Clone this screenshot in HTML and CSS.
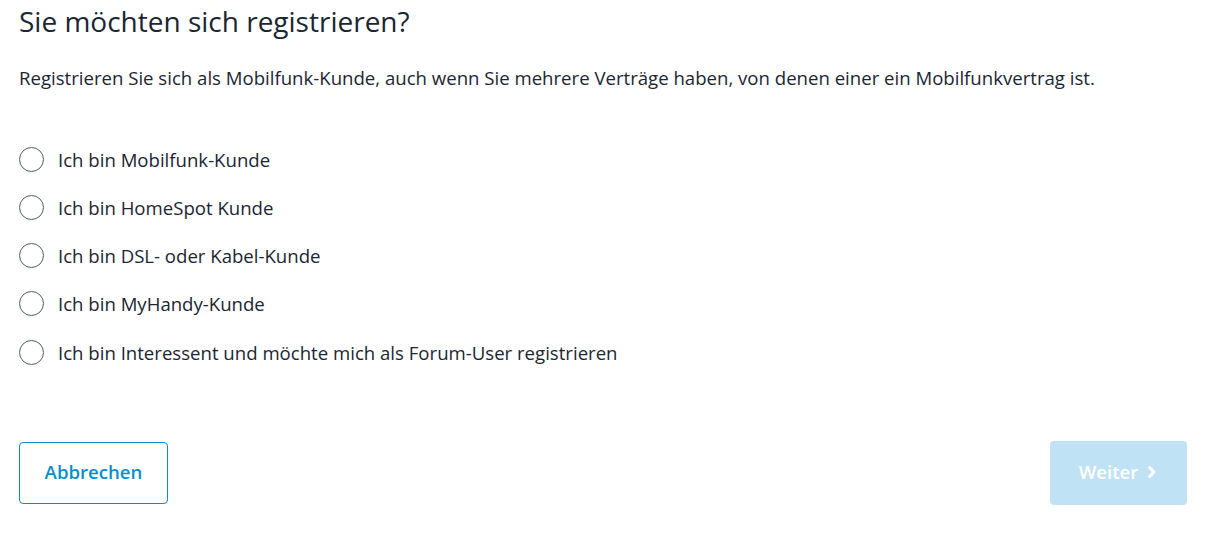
FILE: index.html
```html
<!DOCTYPE html>
<html lang="de">
<head>
<meta charset="utf-8">
<title>Registrieren</title>
<link rel="stylesheet" href="styles.css">
</head>
<body>
<div class="page">
  <h1 class="title">Sie möchten sich registrieren?</h1>
  <p class="intro">Registrieren Sie sich als Mobilfunk-Kunde, auch wenn Sie mehrere Verträge haben, von denen einer ein Mobilfunkvertrag ist.</p>
  <div class="options">
    <label class="option"><span class="radio"></span><span class="label">Ich bin Mobilfunk-Kunde</span></label>
    <label class="option"><span class="radio"></span><span class="label">Ich bin HomeSpot Kunde</span></label>
    <label class="option"><span class="radio"></span><span class="label">Ich bin DSL- oder Kabel-Kunde</span></label>
    <label class="option"><span class="radio"></span><span class="label">Ich bin MyHandy-Kunde</span></label>
    <label class="option"><span class="radio"></span><span class="label">Ich bin Interessent und möchte mich als Forum-User registrieren</span></label>
  </div>
  <div class="actions">
    <button class="btn btn-secondary">Abbrechen</button>
    <button class="btn btn-primary" disabled>Weiter <svg class="chev" width="12" height="14" viewBox="0 0 12 14"><path d="M3.5 2.5 L8 7 L3.5 11.5" fill="none" stroke="currentColor" stroke-width="3" stroke-linecap="round" stroke-linejoin="round"/></svg></button>
  </div>
</div>
</body>
</html>
```
FILE: styles.css
```css
html, body { margin: 0; padding: 0; background: #fff; }
body { font-family: "Open Sans", "Noto Sans", sans-serif; color: #1b2633; }
.page { width: 1168px; padding: 0 0 0 19px; }
.title { margin: 0; padding-top: 2px; font-size: 28px; font-weight: 400; line-height: 38px; letter-spacing: 0; }
.intro { margin: 25px 0 0; font-size: 18.6px; line-height: 26px; }
.options { margin-top: 55px; display: flex; flex-direction: column; gap: 22.25px; }
.option { display: flex; align-items: center; gap: 14px; height: 26px; font-size: 18.6px; }
.radio { width: 23px; height: 23px; border: 1.3px solid #555c66; border-radius: 50%; flex: none; }
.actions { margin-top: 76px; display: flex; justify-content: space-between; align-items: center; }
.btn { font-family: inherit; font-size: 18.6px; font-weight: 600; border-radius: 4px; cursor: pointer; padding: 0 0 3px; }
.btn-secondary { width: 149px; height: 62px; background: #fff; color: #0a8ec9; border: 1.3px solid #0a8ec9; }
.btn-primary { width: 137px; height: 64px; background: #bfe3f5; color: #fff; border: none; display: flex; align-items: center; justify-content: center; gap: 8px; }
.chev { display: block; }
```
